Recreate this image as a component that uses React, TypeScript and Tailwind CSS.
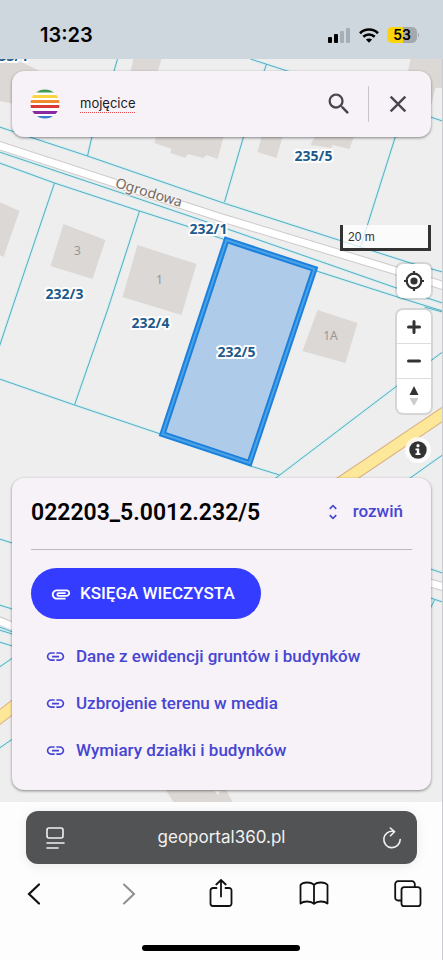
import { useState } from "react";
import { MdAttachment, MdClose, MdLink, MdSearch, MdUnfoldMore } from "react-icons/md";

const LINKS = [
  "Dane z ewidencji gruntów i budynków",
  "Uzbrojenie terenu w media",
  "Wymiary działki i budynków",
];

const BUILDINGS = [
  "0,62 22,62 42,72 42,110 0,101",
  "134,59 162,59 157,76 130,76",
  "158,130 155,143 172,149 171,153 186,158 188,154 204,158 207,155 218,159 226,130",
  "264,130 283,137 277,158 258,152",
  "318,132 311,145 332,148 333,145 350,149 356,132",
  "411,59 443,59 443,88 436,88 432,104 405,90",
  "0,202 20,211 4,257 0,255",
  "64,224 106,240 93,279 51,266",
  "138,245 197,264 182,315 123,297",
  "318,310 358,323 346,363 303,351",
  "163,785 174,802 233,802 224,785",
];

const BORDERS = [
  "M0 127 88 156 221 202 339 240 411 263 443 272",
  "M0 152 128 195 228 229 394 287 443 303",
  "M0 163 55 183 140 211 190 227 226 240 317 271 398 297 443 311",
  "M55 183 12 310 0 346",
  "M140 211 108 310 75 405",
  "M0 379 75 405 161 434 251 466 280 475",
  "M94 130 88 156",
  "M118 59 113 76",
  "M251 59 294 73M267 64 264 73",
  "M425 115 443 121",
  "M246 130 225 202",
  "M398 130 361 247",
  "M275 479 396 387 443 352",
  "M405 482 443 455",
  "M425 307 443 312",
  "M0 539 16 544",
  "M0 605 16 610",
  "M0 627 16 633",
  "M0 630 16 635M0 642 16 647",
  "M0 667 16 656",
  "M0 748 16 737",
  "M425 567 443 573",
  "M425 596 443 602M435 600 431 608",
];

const PARCEL_LABELS = [
  { x: 209, y: 234, text: "232/1" },
  { x: 65, y: 299, text: "232/3" },
  { x: 151, y: 328, text: "232/4" },
  { x: 237, y: 357, text: "232/5" },
  { x: 314, y: 161, text: "235/5" },
  { x: 10, y: 61, text: "233/1" },
];

const HOUSE_NUMBERS = [
  { x: 78, y: 255, text: "3" },
  { x: 160, y: 284, text: "1" },
  { x: 331, y: 340, text: "1A" },
];

function ParcelMap() {
  return (
    <svg
      className="absolute inset-0 h-full w-full"
      viewBox="0 59 443 743"
      preserveAspectRatio="xMidYMid slice"
      role="img"
      aria-label="Mapa działek"
    >
      <rect y="59" width="443" height="743" fill="#eeeeee" />
      <g fill="#dcd8d5">
        {BUILDINGS.map((points) => (
          <polygon key={points} points={points} />
        ))}
      </g>
      <path d="M215 791h6l-3 4z" fill="#f3f3f3" />

      {/* roads */}
      <g fill="none" strokeLinejoin="round">
        <path d="M-5 144 221 217.500 394 270 448 287M-5 619 20 629M420 580 448 588" stroke="#cfc9c9" strokeWidth="9" />
        <path d="M-5 144 221 217.500 394 270 448 287M-5 619 20 629M420 580 448 588" stroke="#fff" strokeWidth="7" />
        <path d="M338 485 448 411M-5 721 20 702" stroke="#dcb184" strokeWidth="13" />
        <path d="M338 485 448 411M-5 721 20 702" stroke="#fde798" strokeWidth="11" />
      </g>

      <g fill="none" stroke="#d5eef2" strokeWidth="3">
        {BORDERS.map((d) => (
          <path key={d} d={d} />
        ))}
      </g>
      <g fill="none" stroke="#55aebf" strokeWidth="1">
        {BORDERS.map((d) => (
          <path key={d} d={d} />
        ))}
      </g>

      {/* selected parcel */}
      <path d="M227 240 315 269 250 463 163 434z" fill="#6fa8e6" fillOpacity="0.5" stroke="#1c80dc" strokeWidth="6" />
      <path d="M227 240 315 269 250 463 163 434z" fill="none" stroke="#4aa3e6" strokeWidth="2" />

      <g className="font-['Noto_Sans',sans-serif]" textAnchor="middle">
        <g fill="#999492" fontSize="12">
          {HOUSE_NUMBERS.map((h) => (
            <text key={h.text} x={h.x} y={h.y}>
              {h.text}
            </text>
          ))}
        </g>
        <text transform="translate(148 197) rotate(17)" fontSize="14" fill="#756a66" stroke="#f5f3f2" strokeWidth="2" paintOrder="stroke">
          Ogrodowa
        </text>
        <g fill="#1c5a8c" fontSize="14" fontWeight="700" stroke="#fff" strokeWidth="4" strokeLinejoin="round" paintOrder="stroke">
          {PARCEL_LABELS.map((p) => (
            <text key={p.text} x={p.x} y={p.y}>
              {p.text}
            </text>
          ))}
        </g>
      </g>
    </svg>
  );
}

function StatusBar() {
  return (
    <header className="flex h-[59px] items-center justify-between bg-[#ced6de] pt-[11px] pr-6 pl-10 text-black">
      <time className="text-xl font-semibold">13:23</time>
      <div className="flex items-center gap-2">
        <svg width="23" height="15" viewBox="0 0 23 15" aria-label="Zasięg">
          <rect y="9" width="4" height="6" rx="1" />
          <rect x="6" y="6" width="4" height="9" rx="1" />
          <rect x="12" y="3" width="4" height="12" rx="1" fill="#a7afb6" />
          <rect x="18" width="4" height="15" rx="1" fill="#a7afb6" />
        </svg>
        <svg width="20" height="15" viewBox="0 0 20 15" fill="none" stroke="#000" strokeWidth="2.600" aria-label="Wi-Fi">
          <path d="M1 5.200C6 .3 14 .3 19 5.200" />
          <path d="M4.300 8.800c3.200-3 8.200-3 11.400 0" />
          <path d="M10 14.800 6.900 11.600c1.700-1.500 4.500-1.500 6.200 0z" fill="#000" stroke="none" />
        </svg>
        <div className="flex items-center gap-px">
          <span className="flex h-4 w-[30px] items-center justify-center rounded-[5px] bg-linear-to-r from-[#fbd50b] from-53% to-[#a4a9ae] to-53% text-sm font-semibold">
            53
          </span>
          <span className="h-1 w-px rounded-r bg-[#a4a9ae]" />
        </div>
      </div>
    </header>
  );
}

function SearchBar() {
  const [query, setQuery] = useState("mojęcice");

  return (
    <form
      className="flex h-[66px] items-center rounded-xl bg-[#f7f1f8] pr-[19px] pl-[18px] shadow-[0_1px_3px_rgba(0,0,0,0.45)]"
      onSubmit={(e) => e.preventDefault()}
    >
      <svg className="size-[30px] shrink-0" viewBox="0 0 30 30" aria-hidden="true">
        <clipPath id="logo-disc">
          <circle cx="15" cy="15" r="14.500" />
        </clipPath>
        <g clipPath="url(#logo-disc)">
          <rect width="30" height="30" fill="#fff" />
          <rect y="0" width="30" height="3.500" fill="#439a55" />
          <rect y="6" width="30" height="3" fill="#fbd43f" />
          <rect y="11" width="30" height="3" fill="#ee8b2c" />
          <rect y="16" width="30" height="3" fill="#d83a35" />
          <rect y="22" width="30" height="3" fill="#8a2aa0" />
          <rect y="27" width="30" height="3" fill="#3a7fcb" />
        </g>
      </svg>
      <input
        type="text"
        aria-label="Szukaj działki"
        spellCheck={false}
        className="ml-5 min-w-0 flex-1 bg-transparent text-[13px] text-[#1d1b20] underline decoration-[#e5484d] decoration-dotted decoration-1 underline-offset-4 outline-none"
        value={query}
        onChange={(e) => setQuery(e.target.value)}
      />
      <button type="submit" aria-label="Szukaj" className="text-[#49454f]">
        <MdSearch className="size-7" />
      </button>
      <span className="mx-[15px] h-9 w-px bg-[#cac4cf]" />
      <button type="button" aria-label="Wyczyść" className="text-[#49454f]" onClick={() => setQuery("")}>
        <MdClose className="size-7" />
      </button>
    </form>
  );
}

function MapControls() {
  return (
    <div className="mt-[88px] flex flex-col items-end">
      <div className="h-[26px] w-[91px] border-3 border-t-0 border-[#333] bg-white/75 pl-[5px] font-['Liberation_Sans',sans-serif] text-xs leading-6 text-[#333]">
        20 m
      </div>
      <button type="button" aria-label="Moja lokalizacja" className="mt-[13px] flex size-[34px] items-center justify-center rounded-md bg-white shadow-[0_0_0_2px_rgba(0,0,0,0.1)]">
        <svg className="size-[22px]" viewBox="0 0 22 22" fill="none" stroke="#333" strokeWidth="2.200">
          <circle cx="11" cy="11" r="7.300" />
          <circle cx="11" cy="11" r="3.600" fill="#333" stroke="none" />
          <path d="M11 1v4M11 17v4M1 11h4M17 11h4" />
        </svg>
      </button>
      <div className="mt-3 flex w-[34px] flex-col divide-y divide-[#ddd] rounded-md bg-white shadow-[0_0_0_2px_rgba(0,0,0,0.1)]">
        <button type="button" aria-label="Przybliż" className="flex h-[34px] items-center justify-center">
          <svg className="size-4" viewBox="0 0 16 16" stroke="#333" strokeWidth="3" strokeLinecap="round">
            <path d="M8 2.500v11M2.500 8h11" />
          </svg>
        </button>
        <button type="button" aria-label="Oddal" className="flex h-[35px] items-center justify-center">
          <svg className="size-4" viewBox="0 0 16 16" stroke="#333" strokeWidth="3" strokeLinecap="round">
            <path d="M2.500 8h11" />
          </svg>
        </button>
        <button type="button" aria-label="Obróć na północ" className="flex h-[34px] items-center justify-center">
          <svg className="h-5 w-[10px]" viewBox="0 0 10 20">
            <path d="M5 0l4.500 9h-9z" fill="#333" />
            <path d="M5 20l4.500-8h-9z" fill="#ccc" />
          </svg>
        </button>
      </div>
      <button type="button" aria-label="Informacje o mapie" className="mt-6 flex size-[26px] items-center justify-center rounded-full bg-white/80">
        <svg className="size-[18px]" viewBox="0 0 18 18">
          <circle cx="9" cy="9" r="8.700" fill="#333" />
          <circle cx="9" cy="4.700" r="1.600" fill="#fff" />
          <path d="M6.500 7.500h3.700v4.800h1.300V14h-5v-1.700h1.300V9.200H6.500z" fill="#fff" />
        </svg>
      </button>
    </div>
  );
}

function ParcelPanel() {
  return (
    <section className="mt-[15px] rounded-xl bg-[#f7f1f8] px-[19px] pb-4 font-['Roboto',sans-serif] shadow-[0_1px_3px_rgba(0,0,0,0.45)]">
      <div className="flex h-[72px] items-center justify-between border-b border-[#bdb8bf]">
        <h1 className="text-[23px] font-semibold text-black">022203_5.0012.232/5</h1>
        <button type="button" className="mr-[9px] flex items-center gap-[10px] pb-1 text-[17px] font-medium text-[#4646d2]">
          <MdUnfoldMore className="size-5" />
          rozwiń
        </button>
      </div>
      <button type="button" className="mt-[18px] flex h-[51px] items-center gap-2 rounded-full bg-[#343dff] pr-[26px] pl-[19px] text-[17px] font-medium text-white">
        <MdAttachment className="size-[22px]" />
        KSIĘGA WIECZYSTA
      </button>
      <ul className="mt-[14px]">
        {LINKS.map((label) => (
          <li key={label}>
            <a href="#" className="flex h-[47px] items-center gap-[10px] pl-[14px] text-[17px] font-medium text-[#4646d2]">
              <MdLink className="size-[21px]" />
              {label}
            </a>
          </li>
        ))}
      </ul>
    </section>
  );
}

function BrowserBar() {
  return (
    <footer className="border-r border-[#c9cbce] bg-[#fdfdfe] pt-[9px] pb-[9px] text-[#111]">
      <div className="mr-[25px] ml-[26px] flex h-[53px] items-center justify-between rounded-xl bg-[#525355] px-[15px] text-white shadow-[0_2px_12px_rgba(0,0,0,0.08)]">
        <button type="button" aria-label="Opcje strony" className="w-7">
          <svg className="mx-auto h-6 w-5" viewBox="0 0 20 24" fill="none" stroke="#f1f1f1" strokeWidth="1.600" strokeLinecap="round">
            <rect x="2" y="2" width="16" height="10" rx="2" />
            <path d="M2 17h17M2 22h11" />
          </svg>
        </button>
        <span className="pr-2 text-[17px] text-[#f1f1f1]">geoportal360.pl</span>
        <button type="button" aria-label="Odśwież" className="w-5">
          <svg className="h-[22px] w-5" viewBox="0 0 20 22" fill="none" stroke="#f1f1f1" strokeWidth="1.600" strokeLinecap="round" strokeLinejoin="round">
            <path d="M11.500 4.400A8.200 8.200 0 1 0 18.200 12.500" />
            <path d="M8.300 1l4.200 3.700-4 4" />
          </svg>
        </button>
      </div>
      <nav className="mt-3 flex h-9 items-center justify-between pr-5 pl-[21px]">
        <button type="button" aria-label="Wstecz" className="w-[26px]">
          <svg className="mx-auto h-6 w-4" viewBox="0 0 16 24" fill="none" stroke="currentColor" strokeWidth="2.200" strokeLinecap="round">
            <path d="M13 2.500 3 12l10 9.500" />
          </svg>
        </button>
        <button type="button" aria-label="Dalej" disabled className="ml-1 w-[26px] text-[#8e8e90]">
          <svg className="mx-auto h-6 w-4" viewBox="0 0 16 24" fill="none" stroke="currentColor" strokeWidth="2" strokeLinecap="round">
            <path d="M3 2.500 13 12 3 21.500" />
          </svg>
        </button>
        <button type="button" aria-label="Udostępnij" className="w-[26px]">
          <svg className="h-[30px] w-[26px]" viewBox="0 0 26 30" fill="none" stroke="currentColor" strokeWidth="1.800" strokeLinecap="round" strokeLinejoin="round">
            <path d="M8.500 9H5a2.500 2.500 0 0 0-2.500 2.500v13A2.500 2.500 0 0 0 5 27h16a2.500 2.500 0 0 0 2.500-2.500v-13A2.500 2.500 0 0 0 21 9h-3.500" />
            <path d="M13 17.500V1M8.300 5.500 13 1 17.700 5.500" />
          </svg>
        </button>
        <button type="button" aria-label="Zakładki" className="w-[30px]">
          <svg className="h-[26px] w-[30px]" viewBox="0 0 30 26" fill="none" stroke="currentColor" strokeWidth="1.800" strokeLinejoin="round">
            <path d="M15 4C12.500.8 4 .5 1.500 4v18.500C4.500 19.800 12 19.800 15 22.800c3-3 10.500-3 13.500-.3V4C26 .5 17.500.8 15 4zM15 4v18.800" />
          </svg>
        </button>
        <button type="button" aria-label="Karty" className="w-7">
          <svg className="size-7" viewBox="0 0 28 28" fill="none" stroke="currentColor" strokeWidth="1.800">
            <path d="M7.500 20.500H4A2.800 2.800 0 0 1 1.200 17.700V4A2.800 2.800 0 0 1 4 1.200h14A2.800 2.800 0 0 1 20.800 4v3" />
            <rect x="7.500" y="7.200" width="19" height="19" rx="2.800" />
          </svg>
        </button>
      </nav>
      <div className="mx-auto mt-[33px] h-[6px] w-[158px] rounded-full bg-black" />
    </footer>
  );
}

export default function App() {
  return (
    <div className="flex min-h-screen flex-col bg-[#fdfdfe] font-['Inter',sans-serif]">
      <StatusBar />
      <main className="relative flex-1 overflow-hidden border-r border-[#c9cbce]">
        <ParcelMap />
        <div className="relative flex flex-col p-3 pr-[11px]">
          <SearchBar />
          <MapControls />
          <ParcelPanel />
        </div>
      </main>
      <BrowserBar />
    </div>
  );
}
